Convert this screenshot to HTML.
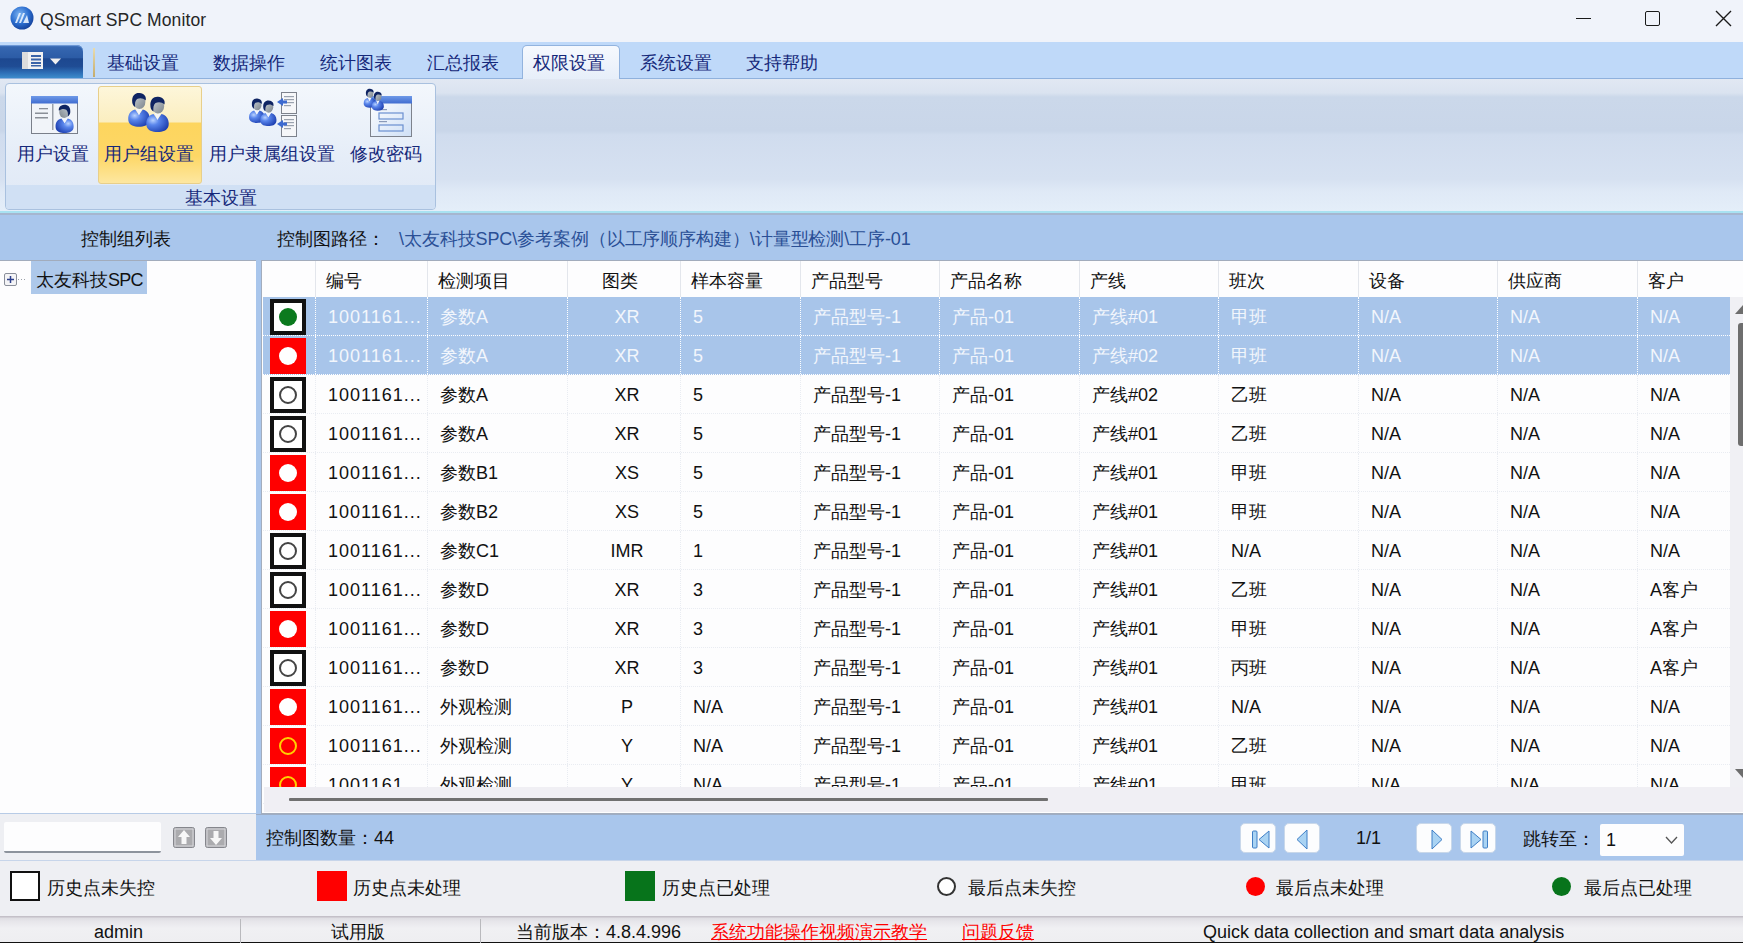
<!DOCTYPE html>
<html><head><meta charset="utf-8">
<style>
*{box-sizing:border-box;margin:0;padding:0}
html,body{width:1743px;height:943px;overflow:hidden;background:#eeeff3;font-family:"Liberation Sans",sans-serif;color:#111}
.abs{position:absolute}
#title{position:absolute;left:0;top:0;width:1743px;height:42px;background:#f0f3fa}
#title .t{position:absolute;left:40px;top:9px;font-size:17.5px;line-height:22px;color:#262626;letter-spacing:0.1px}
#tabs{position:absolute;left:0;top:42px;width:1743px;height:37px;background:#bfd9f9;border-bottom:1px solid #8fb1dd}
#appbtn{position:absolute;left:0;top:3px;width:83px;height:33px;border-radius:0 6px 0 0;
 background:linear-gradient(#4a7cc4 0%,#3566b0 8%,#2c5ca6 38%,#1d4890 42%,#1f4c94 65%,#2e70b8 85%,#3d8ccc 100%);box-shadow:inset 0 1px 0 #6d98d6}
.tab{position:absolute;top:11px;font-size:18px;line-height:20px;color:#15287a}
#acttab{position:absolute;left:522px;top:3px;width:98px;height:35px;border:1px solid #92b3de;border-bottom:none;border-radius:5px 5px 0 0;
 background:linear-gradient(#f6f9fe,#e6eef9)}
#ribbon{position:absolute;left:0;top:79px;width:1743px;height:132px;
 background:linear-gradient(#e1e8f3 0px,#dae3f0 14px,#cbd8ea 18px,#c9d6e9 52px,#d0dcee 56px,#d6e1f1 100px,#dfe9f6 112px,#e4eef9 132px)}
#ribbon:after{content:"";position:absolute;left:0;bottom:-2px;width:100%;height:2px;background:#a8e2f2}
#group{position:absolute;left:5px;top:4px;width:431px;height:127px;border:1px solid #a9c1df;border-radius:4px;
 background:linear-gradient(#f3f7fc,#e5edf8 60%,#dfe8f5)}
#glabel{position:absolute;left:0;bottom:0;width:100%;height:24px;background:#d0e0f4;border-radius:0 0 3px 3px;
 text-align:center;font-size:18px;line-height:27px;color:#15287a}
.rb{position:absolute;top:60px;font-size:18px;line-height:20px;color:#15287a;white-space:nowrap}
#hl{position:absolute;left:92px;top:2px;width:104px;height:98px;border:1px solid #e8cf8a;border-radius:3px;
 background:linear-gradient(#fdf6da 0%,#fbeec0 36%,#fdd55e 38%,#fdd766 72%,#fde7a0 100%)}
#secbar{position:absolute;left:0;top:213px;width:1743px;height:48px;background:#a9c6ec;border-top:2px solid #a6b6cf;border-bottom:1px solid #a2acbc}
#secbar .s{position:absolute;top:14px;font-size:18px;line-height:20px;color:#111}
#left{position:absolute;left:0;top:261px;width:256px;height:553px;background:#fdfdfe;border-bottom:1px solid #b7cbe6}
#midbar{position:absolute;left:256px;top:260px;width:6px;height:600px;background:#a9c6ec;border-right:1px solid #a3adbd}
#grid{position:absolute;left:262px;top:261px;width:1481px;height:553px;background:#fdfdfe;overflow:hidden;border-bottom:1px solid #a3adbd}
.hdr{position:absolute;left:0;top:0;width:1482px;height:36px;background:#fdfdfe}
.hc{position:absolute;top:0;height:36px;line-height:41px;padding-left:10px;font-size:18px;color:#111;border-left:1px solid #e3e6ec;white-space:nowrap}
.row{position:absolute;left:1px;width:1467px;height:39px;border-bottom:1px dotted #e9ecf2}
.row .c{position:absolute;top:0;height:38px;line-height:41px;padding-left:12px;font-size:18px;color:#111;white-space:nowrap;border-left:1px dotted #e9ecf2}
.row .c0{position:absolute;left:0;top:0;width:52px;height:38px}
.row.sel{background:#a8c5ea;border-bottom:1px dotted #fff}
.row.sel .c{color:#f2f6fc;border-left-color:#fff}
.vl{position:absolute;top:36px;width:0;height:520px;border-left:1px dotted #e9ecf2}
.sb{position:absolute;left:7px;top:2px;width:36px;height:36px}
.sbk{border:4px solid #111;background:#fff}
.sred{background:#ff0000}
.sb i{position:absolute;left:50%;top:50%;width:18px;height:18px;margin:-9px 0 0 -9px;border-radius:50%}
.sbk i{margin:-9px 0 0 -9px}
.ring{border:2px solid #444}
#hscroll{position:absolute;left:264px;top:787px;width:1479px;height:25px;background:#f0eff4}
#vscroll{position:absolute;left:1730px;top:297px;width:13px;height:490px;background:#f0f0f4}
#lbot{position:absolute;left:0;top:814px;width:256px;height:46px;background:#eeeff3}
#rbot{position:absolute;left:256px;top:814px;width:1487px;height:46px;background:#a9c6ec;border-top:1px solid #9eadc4}
#legend{position:absolute;left:0;top:860px;width:1743px;height:56px;background:#eeeff3;border-top:1px solid #c7d5ea}
.lg{position:absolute;top:17px;font-size:18px;line-height:20px;color:#111;white-space:nowrap}
#status{position:absolute;left:0;top:916px;width:1743px;height:27px;background:linear-gradient(#c4c0c8 0px,#c4c0c8 1px,#dedde2 2px,#e6e5ea 5px,#f0f0f3 12px,#eeeef1 25px);border-bottom:1.5px solid #111}
.st{position:absolute;top:6px;font-size:18px;line-height:20px;color:#111;white-space:nowrap}
.pbtn{position:absolute;top:8px;width:36px;height:30px;background:#fcfdfe;border-radius:5px;border:1px solid #c9d8ea}
</style></head>
<body>
<svg width="0" height="0" style="position:absolute">
  <defs>
    <linearGradient id="wing" x1="0" y1="0" x2="1" y2="1"><stop offset="0" stop-color="#ffffff"/><stop offset="1" stop-color="#cfe0f6"/></linearGradient>
    <linearGradient id="tbg" x1="0" y1="0" x2="0" y2="1"><stop offset="0" stop-color="#6f9ae8"/><stop offset="1" stop-color="#3f6cd0"/></linearGradient>
    <radialGradient id="bodyg" cx="30%" cy="35%" r="75%"><stop offset="0" stop-color="#b9d2ff"/><stop offset="0.35" stop-color="#5a86ec"/><stop offset="1" stop-color="#1d3fb0"/></radialGradient>
    <linearGradient id="faceg" x1="0" y1="0" x2="1" y2="1"><stop offset="0" stop-color="#c9d0d6"/><stop offset="1" stop-color="#7b838a"/></linearGradient>
    <symbol id="person" viewBox="0 0 24 36">
      <path d="M1.5 30 C0.5 24 3 19.5 8.5 18 L12.5 23.5 L16.5 18 C22 19.5 24.5 24 23.5 30 C22.5 34.5 17.5 36 12.5 36 C7.5 36 2.5 34.5 1.5 30Z" fill="url(#bodyg)"/>
      <path d="M9.5 17.5 L12.5 24 L15.5 17.5 L14 16.5 L12.5 18.5 L11 16.5Z" fill="#f4f6fb"/>
      <ellipse cx="13" cy="10" rx="6.2" ry="7.5" fill="url(#faceg)"/>
      <path d="M5.5 11 C4.5 3 9 0.5 13 0.8 C18 1.2 20.5 4.5 19.5 8.5 C17 6 13.5 5.5 10.5 7 C8.5 8.5 8 12 8.5 15.5 C7 14.5 5.8 13 5.5 11Z" fill="#0f2462"/>
    </symbol>
  </defs>
</svg>
<div id="title">
  <svg class="abs" style="left:10px;top:6px" width="24" height="24" viewBox="0 0 24 24">
    <defs><radialGradient id="ig" cx="40%" cy="35%" r="65%"><stop offset="0" stop-color="#7fb6f2"/><stop offset="0.6" stop-color="#2d6fd0"/><stop offset="1" stop-color="#1745a0"/></radialGradient></defs>
    <circle cx="12" cy="12" r="11.5" fill="url(#ig)"/>
    <path d="M5 17 L9 7 L11 7 L7 17Z M9 17 L13 7 L15 7 L11 17Z M13 17 L17 9 L19 17Z" fill="#e8f2ff" opacity="0.9"/>
  </svg>
  <div class="t">QSmart SPC Monitor</div>
  <div class="abs" style="left:1576px;top:18px;width:15px;height:1.3px;background:#1a1a1a"></div>
  <div class="abs" style="left:1645px;top:11px;width:15px;height:15px;border:1.4px solid #1a1a1a;border-radius:2px"></div>
  <svg class="abs" style="left:1715px;top:10px" width="17" height="17" viewBox="0 0 17 17"><path d="M1 1 L16 16 M16 1 L1 16" stroke="#1a1a1a" stroke-width="1.4"/></svg>
</div>

<div id="tabs">
  <div id="appbtn">
    <svg class="abs" style="left:21px;top:5px" width="42" height="22" viewBox="0 0 42 22">
      <rect x="1" y="2" width="21" height="17" fill="#f2f2f2"/>
      <rect x="1" y="2" width="6" height="17" fill="#dcdcdc"/>
      <rect x="10" y="5" width="10" height="2" fill="#3a64a8"/><rect x="10" y="8.5" width="10" height="2" fill="#3a64a8"/>
      <rect x="10" y="12" width="10" height="2" fill="#3a64a8"/><rect x="10" y="15" width="10" height="1.5" fill="#3a64a8"/>
      <path d="M29 8.5 L40 8.5 L34.5 14.5Z" fill="#f0f0f0"/>
    </svg>
  </div>
  <div class="abs" style="left:93px;top:6px;width:2px;height:29px;background:linear-gradient(#e8dcb0,#c4ab6c)"></div>
  <div id="acttab"></div>
  <div class="tab" style="left:107px">基础设置</div>
  <div class="tab" style="left:213px">数据操作</div>
  <div class="tab" style="left:320px">统计图表</div>
  <div class="tab" style="left:427px">汇总报表</div>
  <div class="tab" style="left:533px">权限设置</div>
  <div class="tab" style="left:640px">系统设置</div>
  <div class="tab" style="left:746px">支持帮助</div>
</div>

<div id="ribbon">
  <div id="group">
    <div id="hl"></div>
    <!-- icon 1 -->
    <svg class="abs" style="left:25px;top:12px" width="48" height="39" viewBox="0 0 48 39">
      <rect x="0.5" y="0.5" width="46" height="37" fill="#f1f4f9" stroke="#7a7f8a"/>
      <rect x="0" y="0" width="47" height="7.5" fill="url(#tbg)"/>
      <rect x="21" y="8" width="1.5" height="26" fill="#9aa0aa"/>
      <rect x="8" y="12" width="9" height="1.3" fill="#8a8f98"/><rect x="4" y="16.5" width="13" height="1.5" fill="#8a8f98"/><rect x="4" y="21" width="13" height="1.5" fill="#8a8f98"/>
      <use href="#person" x="24" y="8" width="20" height="29" transform="translate(68,0) scale(-1,1)"/>
    </svg>
    <!-- icon 2 -->
    <svg class="abs" style="left:115px;top:5px" width="52" height="46" viewBox="0 0 52 46">
      <use href="#person" x="6" y="3" width="23" height="35"/>
      <use href="#person" x="24" y="7" width="24" height="36"/>
    </svg>
    <!-- icon 3 -->
    <svg class="abs" style="left:238px;top:6px" width="58" height="48" viewBox="0 0 58 48">
      <rect x="37.5" y="2.5" width="15" height="21" fill="#f6f7f9" stroke="#7d828c"/>
      <rect x="37.5" y="25.5" width="15" height="21" fill="#f6f7f9" stroke="#7d828c"/>
      <g fill="#9aa2ae"><rect x="40" y="6" width="10" height="1.2"/><rect x="40" y="9" width="10" height="1.2"/><rect x="40" y="12" width="10" height="1.2"/><rect x="40" y="15" width="7" height="1.2"/><rect x="40" y="29" width="10" height="1.2"/><rect x="40" y="32" width="10" height="1.2"/><rect x="40" y="35" width="10" height="1.2"/><rect x="40" y="38" width="7" height="1.2"/></g>
      <path d="M33 12 L39 8 L39 10.5 L43 10.5 L43 13.5 L39 13.5 L39 16Z" fill="#3d6ad0"/><path d="M33 34 L39 30 L39 32.5 L43 32.5 L43 35.5 L39 35.5 L39 38Z" fill="#3d6ad0"/>
      <use href="#person" x="4" y="8" width="17" height="25"/>
      <use href="#person" x="15" y="10" width="18" height="26"/>
    </svg>
    <!-- icon 4 -->
    <svg class="abs" style="left:355px;top:4px" width="52" height="50" viewBox="0 0 52 50">
      <rect x="9.5" y="8.5" width="41" height="40" fill="url(#wing)" stroke="#7d828c"/>
      <rect x="9" y="8" width="42" height="7.5" fill="url(#tbg)"/>
      <rect x="18" y="25" width="24" height="6" fill="none" stroke="#6a8fd0" stroke-width="1.2"/>
      <rect x="18" y="37" width="24" height="6" fill="none" stroke="#6a8fd0" stroke-width="1.2"/>
      <rect x="18" y="21" width="8" height="1.2" fill="#8a9ab8"/><rect x="18" y="33" width="8" height="1.2" fill="#8a9ab8"/>
      <use href="#person" x="2" y="0" width="13" height="20"/>
      <use href="#person" x="10" y="3" width="13" height="20"/>
    </svg>
    <div class="rb" style="left:11px">用户设置</div>
    <div class="rb" style="left:98px">用户组设置</div>
    <div class="rb" style="left:203px">用户隶属组设置</div>
    <div class="rb" style="left:344px">修改密码</div>
    <div id="glabel">基本设置</div>
  </div>
</div>

<div id="secbar">
  <div class="s" style="left:81px">控制组列表</div>
  <div class="s" style="left:277px">控制图路径：</div>
  <div class="s" style="left:399px;color:#2a4f96;letter-spacing:-0.1px">\太友科技SPC\参考案例（以工序顺序构建）\计量型检测\工序-01</div>
</div>

<div id="left">
  <svg class="abs" style="left:4px;top:12px" width="24" height="14" viewBox="0 0 24 14">
    <rect x="0.5" y="0.5" width="12" height="12" rx="1.5" fill="#f4f4f6" stroke="#8a8f9a"/>
    <path d="M3 6.5 H10 M6.5 3 V10" stroke="#2c3f8c" stroke-width="1.5"/>
    <path d="M14 6.5 H22" stroke="#9aa0a8" stroke-dasharray="1 2"/>
  </svg>
  <div class="abs" style="left:31px;top:0px;width:116px;height:33px;background:#adc8ea"></div>
  <div class="abs" style="left:36px;top:9px;font-size:18px;line-height:20px;color:#111">太友科技<span style="letter-spacing:-0.8px">SPC</span></div>
</div>
<div id="midbar"></div>

<div id="grid">

<div class="hdr"><div class="hc" style="left:53px;width:112px">编号</div><div class="hc" style="left:165px;width:140px">检测项目</div><div class="hc" style="left:305px;width:113px;text-align:center;padding-left:0;padding-right:8px">图类</div><div class="hc" style="left:418px;width:120px">样本容量</div><div class="hc" style="left:538px;width:139px">产品型号</div><div class="hc" style="left:677px;width:140px">产品名称</div><div class="hc" style="left:817px;width:139px">产线</div><div class="hc" style="left:956px;width:140px">班次</div><div class="hc" style="left:1096px;width:139px">设备</div><div class="hc" style="left:1235px;width:140px">供应商</div><div class="hc" style="left:1375px;width:139px">客户</div></div>
<div class="row sel" style="top:36px"><div class="c0"><div class="sb sbk"><i class="dot" style="background:#0b7a1e"></i></div></div><div class="c" style="left:52px;width:112px;letter-spacing:1px;">1001161...</div><div class="c" style="left:164px;width:140px;">参数A</div><div class="c" style="left:304px;width:113px;text-align:center;padding-left:6px;">XR</div><div class="c" style="left:417px;width:120px;">5</div><div class="c" style="left:537px;width:139px;">产品型号-1</div><div class="c" style="left:676px;width:140px;">产品-01</div><div class="c" style="left:816px;width:139px;">产线#01</div><div class="c" style="left:955px;width:140px;">甲班</div><div class="c" style="left:1095px;width:139px;">N/A</div><div class="c" style="left:1234px;width:140px;">N/A</div><div class="c" style="left:1374px;width:139px;">N/A</div></div>
<div class="row sel" style="top:75px"><div class="c0"><div class="sb sred"><i class="dot" style="background:#fff"></i></div></div><div class="c" style="left:52px;width:112px;letter-spacing:1px;">1001161...</div><div class="c" style="left:164px;width:140px;">参数A</div><div class="c" style="left:304px;width:113px;text-align:center;padding-left:6px;">XR</div><div class="c" style="left:417px;width:120px;">5</div><div class="c" style="left:537px;width:139px;">产品型号-1</div><div class="c" style="left:676px;width:140px;">产品-01</div><div class="c" style="left:816px;width:139px;">产线#02</div><div class="c" style="left:955px;width:140px;">甲班</div><div class="c" style="left:1095px;width:139px;">N/A</div><div class="c" style="left:1234px;width:140px;">N/A</div><div class="c" style="left:1374px;width:139px;">N/A</div></div>
<div class="row" style="top:114px"><div class="c0"><div class="sb sbk"><i class="ring"></i></div></div><div class="c" style="left:52px;width:112px;letter-spacing:1px;">1001161...</div><div class="c" style="left:164px;width:140px;">参数A</div><div class="c" style="left:304px;width:113px;text-align:center;padding-left:6px;">XR</div><div class="c" style="left:417px;width:120px;">5</div><div class="c" style="left:537px;width:139px;">产品型号-1</div><div class="c" style="left:676px;width:140px;">产品-01</div><div class="c" style="left:816px;width:139px;">产线#02</div><div class="c" style="left:955px;width:140px;">乙班</div><div class="c" style="left:1095px;width:139px;">N/A</div><div class="c" style="left:1234px;width:140px;">N/A</div><div class="c" style="left:1374px;width:139px;">N/A</div></div>
<div class="row" style="top:153px"><div class="c0"><div class="sb sbk"><i class="ring"></i></div></div><div class="c" style="left:52px;width:112px;letter-spacing:1px;">1001161...</div><div class="c" style="left:164px;width:140px;">参数A</div><div class="c" style="left:304px;width:113px;text-align:center;padding-left:6px;">XR</div><div class="c" style="left:417px;width:120px;">5</div><div class="c" style="left:537px;width:139px;">产品型号-1</div><div class="c" style="left:676px;width:140px;">产品-01</div><div class="c" style="left:816px;width:139px;">产线#01</div><div class="c" style="left:955px;width:140px;">乙班</div><div class="c" style="left:1095px;width:139px;">N/A</div><div class="c" style="left:1234px;width:140px;">N/A</div><div class="c" style="left:1374px;width:139px;">N/A</div></div>
<div class="row" style="top:192px"><div class="c0"><div class="sb sred"><i class="dot" style="background:#fff"></i></div></div><div class="c" style="left:52px;width:112px;letter-spacing:1px;">1001161...</div><div class="c" style="left:164px;width:140px;">参数B1</div><div class="c" style="left:304px;width:113px;text-align:center;padding-left:6px;">XS</div><div class="c" style="left:417px;width:120px;">5</div><div class="c" style="left:537px;width:139px;">产品型号-1</div><div class="c" style="left:676px;width:140px;">产品-01</div><div class="c" style="left:816px;width:139px;">产线#01</div><div class="c" style="left:955px;width:140px;">甲班</div><div class="c" style="left:1095px;width:139px;">N/A</div><div class="c" style="left:1234px;width:140px;">N/A</div><div class="c" style="left:1374px;width:139px;">N/A</div></div>
<div class="row" style="top:231px"><div class="c0"><div class="sb sred"><i class="dot" style="background:#fff"></i></div></div><div class="c" style="left:52px;width:112px;letter-spacing:1px;">1001161...</div><div class="c" style="left:164px;width:140px;">参数B2</div><div class="c" style="left:304px;width:113px;text-align:center;padding-left:6px;">XS</div><div class="c" style="left:417px;width:120px;">5</div><div class="c" style="left:537px;width:139px;">产品型号-1</div><div class="c" style="left:676px;width:140px;">产品-01</div><div class="c" style="left:816px;width:139px;">产线#01</div><div class="c" style="left:955px;width:140px;">甲班</div><div class="c" style="left:1095px;width:139px;">N/A</div><div class="c" style="left:1234px;width:140px;">N/A</div><div class="c" style="left:1374px;width:139px;">N/A</div></div>
<div class="row" style="top:270px"><div class="c0"><div class="sb sbk"><i class="ring"></i></div></div><div class="c" style="left:52px;width:112px;letter-spacing:1px;">1001161...</div><div class="c" style="left:164px;width:140px;">参数C1</div><div class="c" style="left:304px;width:113px;text-align:center;padding-left:6px;">IMR</div><div class="c" style="left:417px;width:120px;">1</div><div class="c" style="left:537px;width:139px;">产品型号-1</div><div class="c" style="left:676px;width:140px;">产品-01</div><div class="c" style="left:816px;width:139px;">产线#01</div><div class="c" style="left:955px;width:140px;">N/A</div><div class="c" style="left:1095px;width:139px;">N/A</div><div class="c" style="left:1234px;width:140px;">N/A</div><div class="c" style="left:1374px;width:139px;">N/A</div></div>
<div class="row" style="top:309px"><div class="c0"><div class="sb sbk"><i class="ring"></i></div></div><div class="c" style="left:52px;width:112px;letter-spacing:1px;">1001161...</div><div class="c" style="left:164px;width:140px;">参数D</div><div class="c" style="left:304px;width:113px;text-align:center;padding-left:6px;">XR</div><div class="c" style="left:417px;width:120px;">3</div><div class="c" style="left:537px;width:139px;">产品型号-1</div><div class="c" style="left:676px;width:140px;">产品-01</div><div class="c" style="left:816px;width:139px;">产线#01</div><div class="c" style="left:955px;width:140px;">乙班</div><div class="c" style="left:1095px;width:139px;">N/A</div><div class="c" style="left:1234px;width:140px;">N/A</div><div class="c" style="left:1374px;width:139px;">A客户</div></div>
<div class="row" style="top:348px"><div class="c0"><div class="sb sred"><i class="dot" style="background:#fff"></i></div></div><div class="c" style="left:52px;width:112px;letter-spacing:1px;">1001161...</div><div class="c" style="left:164px;width:140px;">参数D</div><div class="c" style="left:304px;width:113px;text-align:center;padding-left:6px;">XR</div><div class="c" style="left:417px;width:120px;">3</div><div class="c" style="left:537px;width:139px;">产品型号-1</div><div class="c" style="left:676px;width:140px;">产品-01</div><div class="c" style="left:816px;width:139px;">产线#01</div><div class="c" style="left:955px;width:140px;">甲班</div><div class="c" style="left:1095px;width:139px;">N/A</div><div class="c" style="left:1234px;width:140px;">N/A</div><div class="c" style="left:1374px;width:139px;">A客户</div></div>
<div class="row" style="top:387px"><div class="c0"><div class="sb sbk"><i class="ring"></i></div></div><div class="c" style="left:52px;width:112px;letter-spacing:1px;">1001161...</div><div class="c" style="left:164px;width:140px;">参数D</div><div class="c" style="left:304px;width:113px;text-align:center;padding-left:6px;">XR</div><div class="c" style="left:417px;width:120px;">3</div><div class="c" style="left:537px;width:139px;">产品型号-1</div><div class="c" style="left:676px;width:140px;">产品-01</div><div class="c" style="left:816px;width:139px;">产线#01</div><div class="c" style="left:955px;width:140px;">丙班</div><div class="c" style="left:1095px;width:139px;">N/A</div><div class="c" style="left:1234px;width:140px;">N/A</div><div class="c" style="left:1374px;width:139px;">A客户</div></div>
<div class="row" style="top:426px"><div class="c0"><div class="sb sred"><i class="dot" style="background:#fff"></i></div></div><div class="c" style="left:52px;width:112px;letter-spacing:1px;">1001161...</div><div class="c" style="left:164px;width:140px;">外观检测</div><div class="c" style="left:304px;width:113px;text-align:center;padding-left:6px;">P</div><div class="c" style="left:417px;width:120px;">N/A</div><div class="c" style="left:537px;width:139px;">产品型号-1</div><div class="c" style="left:676px;width:140px;">产品-01</div><div class="c" style="left:816px;width:139px;">产线#01</div><div class="c" style="left:955px;width:140px;">N/A</div><div class="c" style="left:1095px;width:139px;">N/A</div><div class="c" style="left:1234px;width:140px;">N/A</div><div class="c" style="left:1374px;width:139px;">N/A</div></div>
<div class="row" style="top:465px"><div class="c0"><div class="sb sred"><i class="ring" style="border-color:#ffd200"></i></div></div><div class="c" style="left:52px;width:112px;letter-spacing:1px;">1001161...</div><div class="c" style="left:164px;width:140px;">外观检测</div><div class="c" style="left:304px;width:113px;text-align:center;padding-left:6px;">Y</div><div class="c" style="left:417px;width:120px;">N/A</div><div class="c" style="left:537px;width:139px;">产品型号-1</div><div class="c" style="left:676px;width:140px;">产品-01</div><div class="c" style="left:816px;width:139px;">产线#01</div><div class="c" style="left:955px;width:140px;">乙班</div><div class="c" style="left:1095px;width:139px;">N/A</div><div class="c" style="left:1234px;width:140px;">N/A</div><div class="c" style="left:1374px;width:139px;">N/A</div></div>
<div class="row" style="top:504px"><div class="c0"><div class="sb sred"><i class="ring" style="border-color:#ffd200"></i></div></div><div class="c" style="left:52px;width:112px;letter-spacing:1px;">1001161...</div><div class="c" style="left:164px;width:140px;">外观检测</div><div class="c" style="left:304px;width:113px;text-align:center;padding-left:6px;">Y</div><div class="c" style="left:417px;width:120px;">N/A</div><div class="c" style="left:537px;width:139px;">产品型号-1</div><div class="c" style="left:676px;width:140px;">产品-01</div><div class="c" style="left:816px;width:139px;">产线#01</div><div class="c" style="left:955px;width:140px;">甲班</div><div class="c" style="left:1095px;width:139px;">N/A</div><div class="c" style="left:1234px;width:140px;">N/A</div><div class="c" style="left:1374px;width:139px;">N/A</div></div>
</div>
<div id="hscroll">
  <div class="abs" style="left:25px;top:11px;width:759px;height:3px;background:#707070;border-radius:1px"></div>
</div>
<div id="vscroll">
  <svg class="abs" style="left:5px;top:8px" width="10" height="9" viewBox="0 0 10 9"><path d="M8 0 L8 9 L0 9Z" fill="#6d6d6d"/></svg>
  <div class="abs" style="left:8px;top:26px;width:8px;height:123px;background:#6e6e6e;border-radius:3px"></div>
  <svg class="abs" style="left:5px;top:472px" width="10" height="9" viewBox="0 0 10 9"><path d="M0 0 L10 0 L8 9Z" fill="#6d6d6d"/></svg>
</div>

<div id="lbot">
  <div class="abs" style="left:4px;top:8px;width:157px;height:31px;background:#fdfdfe;border-bottom:2px solid #8d939c;border-radius:2px"></div>
  <svg class="abs" style="left:173px;top:13px" width="22" height="21" viewBox="0 0 22 21">
    <rect x="0.5" y="0.5" width="21" height="20" rx="2" fill="#ababae" stroke="#85868c"/><rect x="2" y="2" width="18" height="17" fill="none" stroke="#d8d8dc" stroke-width="1"/>
    <path d="M11 3 L17 10 L13.5 10 L13.5 17 L8.5 17 L8.5 10 L5 10Z" fill="#f7f7f7"/>
  </svg>
  <svg class="abs" style="left:205px;top:13px" width="22" height="21" viewBox="0 0 22 21">
    <rect x="0.5" y="0.5" width="21" height="20" rx="2" fill="#ababae" stroke="#85868c"/><rect x="2" y="2" width="18" height="17" fill="none" stroke="#d8d8dc" stroke-width="1"/>
    <path d="M11 18 L17 11 L13.5 11 L13.5 4 L8.5 4 L8.5 11 L5 11Z" fill="#f7f7f7"/>
  </svg>
</div>
<div id="rbot">
  <div class="abs" style="left:10px;top:13px;font-size:18px;line-height:20px;color:#111">控制图数量：44</div>
  <div class="pbtn" style="left:984px"><svg class="abs" style="left:10px;top:6px" width="20" height="19" viewBox="0 0 20 19"><rect x="1.5" y="1" width="4.5" height="17" rx="1" fill="#a9d3f3" stroke="#3f7fc6"/><path d="M18 1 L8 9.5 L18 18Z" fill="#a9d3f3" stroke="#3f7fc6" stroke-linejoin="round"/></svg></div>
  <div class="pbtn" style="left:1028px"><svg class="abs" style="left:10px;top:5px" width="16" height="21" viewBox="0 0 16 21"><path d="M12 1 L2 10.5 L12 20Z" fill="#a9d3f3" stroke="#3f7fc6" stroke-linejoin="round"/></svg></div>
  <div class="abs" style="left:1100px;top:13px;font-size:18px;line-height:20px;color:#111">1/1</div>
  <div class="pbtn" style="left:1160px"><svg class="abs" style="left:12px;top:5px" width="16" height="21" viewBox="0 0 16 21"><path d="M3 1 L13 10.5 L3 20Z" fill="#a9d3f3" stroke="#3f7fc6" stroke-linejoin="round"/></svg></div>
  <div class="pbtn" style="left:1204px"><svg class="abs" style="left:8px;top:6px" width="20" height="19" viewBox="0 0 20 19"><path d="M2 1 L12 9.5 L2 18Z" fill="#a9d3f3" stroke="#3f7fc6" stroke-linejoin="round"/><rect x="14" y="1" width="4.5" height="17" rx="1" fill="#a9d3f3" stroke="#3f7fc6"/></svg></div>
  <div class="abs" style="left:1267px;top:14px;font-size:18px;line-height:20px;color:#111">跳转至：</div>
  <div class="abs" style="left:1344px;top:9px;width:84px;height:32px;background:#fdfdfe;border-radius:2px">
    <div class="abs" style="left:6px;top:6px;font-size:18px;line-height:20px;color:#111">1</div>
    <svg class="abs" style="left:65px;top:12px" width="13" height="8" viewBox="0 0 13 8"><path d="M1 1 L6.5 7 L12 1" fill="none" stroke="#555" stroke-width="1.3"/></svg>
  </div>
</div>

<div id="legend">
  <div class="abs" style="left:10px;top:10px;width:30px;height:30px;border:2px solid #111;background:#fff"></div>
  <div class="lg" style="left:47px">历史点未失控</div>
  <div class="abs" style="left:317px;top:10px;width:30px;height:30px;background:#ff0000"></div>
  <div class="lg" style="left:353px">历史点未处理</div>
  <div class="abs" style="left:625px;top:10px;width:30px;height:30px;background:#07741b"></div>
  <div class="lg" style="left:662px">历史点已处理</div>
  <div class="abs" style="left:937px;top:16px;width:19px;height:19px;border:2.5px solid #333;border-radius:50%;background:#fff"></div>
  <div class="lg" style="left:968px">最后点未失控</div>
  <div class="abs" style="left:1246px;top:16px;width:19px;height:19px;border-radius:50%;background:#ff0000"></div>
  <div class="lg" style="left:1276px">最后点未处理</div>
  <div class="abs" style="left:1552px;top:16px;width:19px;height:19px;border-radius:50%;background:#07741b"></div>
  <div class="lg" style="left:1584px">最后点已处理</div>
</div>

<div id="status">
  <div class="st" style="left:94px">admin</div>
  <div class="abs" style="left:240px;top:3px;width:1px;height:25px;background:#b9b9bd"></div>
  <div class="st" style="left:331px">试用版</div>
  <div class="abs" style="left:480px;top:3px;width:1px;height:25px;background:#b9b9bd"></div>
  <div class="st" style="left:516px">当前版本：4.8.4.996</div>
  <div class="st" style="left:711px;color:#f00;text-decoration:underline">系统功能操作视频演示教学</div>
  <div class="st" style="left:962px;color:#f00;text-decoration:underline">问题反馈</div>
  <div class="st" style="left:1203px">Quick data collection and smart data analysis</div>
</div>
</body></html>
